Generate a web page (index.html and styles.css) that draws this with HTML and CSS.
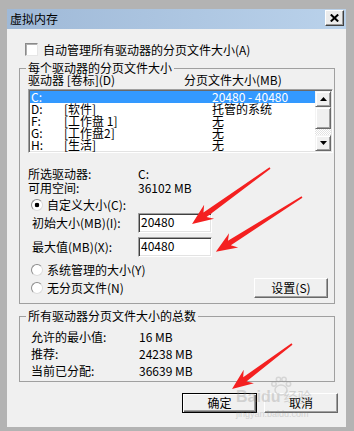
FILE: index.html
```html
<!DOCTYPE html>
<html>
<head>
<meta charset="utf-8">
<link rel="stylesheet" href="styles.css">
</head>
<body>
<div class="window">
  <div class="titlebar">
    <span class="title">虚拟内存</span>
    <span class="close"><svg width="9" height="8" viewBox="0 0 9 8"><path d="M0.8 0.5 L8.2 7.5 M8.2 0.5 L0.8 7.5" stroke="#000" stroke-width="2"/></svg></span>
  </div>
  <div class="dialog">
    <div class="check-row"><span class="checkbox"></span><span>自动管理所有驱动器的分页文件大小(A)</span></div>

    <fieldset class="group group1">
      <legend>每个驱动器的分页文件大小</legend>
      <div class="list-head"><span>驱动器 [卷标](D)</span><span>分页文件大小(MB)</span></div>
      <div class="listbox">
        <div class="rows">
          <div class="row sel"><span>C:</span><span></span><span>20480 - 40480</span></div>
          <div class="row"><span>D:</span><span>[软件]</span><span>托管的系统</span></div>
          <div class="row"><span>F:</span><span>[工作盘 1]</span><span>无</span></div>
          <div class="row"><span>G:</span><span>[工作盘2]</span><span>无</span></div>
          <div class="row"><span>H:</span><span>[生活]</span><span>无</span></div>
        </div>
        <div class="vscroll">
          <div class="sbtn"><svg width="7" height="4" viewBox="0 0 7 4"><polygon points="0,4 7,4 3.5,0" fill="#000"/></svg></div>
          <div class="thumb"></div>
          <div class="track"></div>
          <div class="sbtn"><svg width="7" height="4" viewBox="0 0 7 4"><polygon points="0,0 7,0 3.5,4" fill="#000"/></svg></div>
        </div>
      </div>
      <div class="info">
        <div class="kv"><span class="k">所选驱动器:</span><span>C:</span></div>
        <div class="kv"><span class="k">可用空间:</span><span>36102 MB</span></div>
      </div>
      <div class="radio-row r1"><span class="radio on"></span><span>自定义大小(C):</span></div>
      <div class="field-row f1"><span class="flabel">初始大小(MB)(I):</span><span class="edit">20480</span></div>
      <div class="field-row f2"><span class="flabel">最大值(MB)(X):</span><span class="edit">40480</span></div>
      <div class="radio-row r2"><span class="radio"></span><span>系统管理的大小(Y)</span></div>
      <div class="last-row">
        <div class="radio-row"><span class="radio"></span><span>无分页文件(N)</span></div>
        <button class="btn set">设置(S)</button>
      </div>
    </fieldset>

    <fieldset class="group group2">
      <legend>所有驱动器分页文件大小的总数</legend>
      <div class="kv2"><span class="k2">允许的最小值:</span><span>16 MB</span></div>
      <div class="kv2"><span class="k2">推荐:</span><span>24238 MB</span></div>
      <div class="kv2"><span class="k2">当前已分配:</span><span>36639 MB</span></div>
    </fieldset>

    <div class="buttons">
      <button class="btn default">确定</button>
      <button class="btn">取消</button>
    </div>
  </div>

  <div class="watermark">
    <svg class="paw" width="22" height="20" viewBox="0 0 22 20">
      <ellipse cx="11" cy="14" rx="6" ry="5" fill="none" stroke="#9a9a9a" stroke-width="1.5"/>
      <circle cx="4" cy="8" r="2.2" fill="none" stroke="#9a9a9a" stroke-width="1.5"/>
      <circle cx="8.5" cy="3.5" r="2.2" fill="none" stroke="#9a9a9a" stroke-width="1.5"/>
      <circle cx="14" cy="3.5" r="2.2" fill="none" stroke="#9a9a9a" stroke-width="1.5"/>
      <circle cx="18.5" cy="8" r="2.2" fill="none" stroke="#9a9a9a" stroke-width="1.5"/>
    </svg>
    <div class="wm-line"><span class="wm-bai">Baidu</span><span class="wm-jy">经验</span></div>
    <div class="wm-url">jingyan.baidu.com</div>
  </div>

  <svg class="arrows" width="354" height="431" viewBox="0 0 354 431">
    <polygon transform="translate(270,168) rotate(144.3)" points="0,-0.8 80,-2.7 75,-8.5 96,0 75,8.5 80,2.7 0,0.8" fill="#f42020"/>
    <polygon transform="translate(302,197) rotate(147.6)" points="0,-0.8 86,-2.7 81,-8.5 102,0 81,8.5 86,2.7 0,0.8" fill="#f42020"/>
    <polygon transform="translate(292,344) rotate(143.1)" points="0,-0.8 59,-2.7 54,-8.5 75,0 54,8.5 59,2.7 0,0.8" fill="#f42020"/>
  </svg>
</div>
</body>
</html>
```

FILE: styles.css
```css
html, body {
  margin: 0;
  padding: 0;
  background: #ffffff;
}

body {
  font-family: "Noto Sans CJK SC", "Noto Sans", sans-serif;
  font-size: 12px;
  color: #000;
}

.window {
  position: relative;
  width: 354px;
  height: 431px;
  box-sizing: border-box;
  padding: 9px 8px 4px 7px;
  background: #b3b3b3;
  overflow: hidden;
}

.titlebar {
  height: 20px;
  display: flex;
  align-items: flex-start;
  justify-content: space-between;
  background: linear-gradient(to right, #9fb9d7, #bad2eb);
}

.title {
  margin-left: 3px;
  line-height: 20px;
  font-size: 12px;
}

.close {
  margin-top: 1px;
  margin-right: 2px;
  width: 19px;
  height: 16px;
  box-sizing: border-box;
  display: flex;
  align-items: center;
  justify-content: center;
  background: #ececec;
  border: 1px solid;
  border-color: #ffffff #404040 #404040 #ffffff;
  box-shadow: inset -1px -1px 0 #9a9a9a;
}

.dialog {
  height: 398px;
  background: #f0f0f0;
  overflow: hidden;
}

.check-row {
  margin-top: 14px;
  padding-left: 18px;
  height: 13px;
  display: flex;
  align-items: center;
  gap: 5px;
  line-height: 13px;
}

.checkbox {
  width: 13px;
  height: 13px;
  box-sizing: border-box;
  background: #fff;
  border: 1px solid;
  border-color: #8a8a8a #e6e6e6 #e6e6e6 #8a8a8a;
  box-shadow: inset 1px 1px 0 #b0b0b0;
}

.group {
  margin: 0 11px 0 12px;
  border: 1px solid #a0a0a0;
  min-width: 0;
}

.group legend {
  padding: 0 2px;
  line-height: 12px;
  height: 12px;
}

.group1 {
  margin-top: 6px;
  padding: 0 1px 5px 8px;
}

.group1 legend {
  margin-left: -2px;
}

.group2 {
  margin-top: 6px;
  padding: 6px 1px 2px 11px;
}

.group2 legend {
  margin-left: -5px;
}

.list-head {
  display: grid;
  grid-template-columns: 156px 1fr;
  height: 12px;
  line-height: 12px;
}

.listbox {
  margin-top: 3px;
  height: 64px;
  box-sizing: border-box;
  display: flex;
  background: #fff;
  border: 1px solid;
  border-color: #a0a0a0 #ffffff #ffffff #a0a0a0;
  box-shadow: inset 1px 1px 0 #696969, inset -1px -1px 0 #e3e3e3;
  padding: 1px;
}

.rows {
  flex: 1;
}

.row {
  display: grid;
  grid-template-columns: 33px 148px 1fr;
  height: 12px;
  line-height: 12px;
  padding-left: 1px;
  white-space: nowrap;
}

.row.sel {
  background: #3399ff;
  color: #fff;
}

.vscroll {
  width: 16px;
  display: flex;
  flex-direction: column;
}

.sbtn,
.thumb {
  box-sizing: border-box;
  background: #f0f0f0;
  border: 1px solid;
  border-color: #f4f4f4 #696969 #696969 #f4f4f4;
  box-shadow: inset 1px 1px 0 #ffffff, inset -1px -1px 0 #a0a0a0;
}

.sbtn {
  height: 16px;
  display: flex;
  align-items: center;
  justify-content: center;
}

.sbtn svg {
  display: block;
}

.thumb {
  height: 22px;
}

.track {
  flex: 1;
  background: repeating-conic-gradient(#ffffff 0 25%, #e2e2e2 0 50%) 0 0 / 2px 2px;
}

.info {
  margin-top: 14px;
}

.kv {
  display: flex;
  height: 14px;
  line-height: 14px;
}

.k {
  width: 110px;
}

.radio-row {
  display: flex;
  align-items: center;
  gap: 4px;
  height: 12px;
  line-height: 12px;
  padding-left: 3px;
}

.radio {
  width: 12px;
  height: 12px;
  box-sizing: border-box;
  border-radius: 50%;
  background: #fff;
  border: 1px solid;
  border-color: #8c8c8c #dcdcdc #dcdcdc #8c8c8c;
}

.radio.on {
  background: radial-gradient(circle, #000 0 2px, #fff 2.6px);
}

.r1 {
  margin-top: 4px;
}

.field-row {
  display: flex;
  align-items: center;
  height: 20px;
  padding-left: 4px;
}

.f1 {
  margin-top: 2px;
}

.f2 {
  margin-top: 4px;
}

.flabel {
  width: 106px;
  line-height: 12px;
}

.edit {
  width: 74px;
  height: 20px;
  box-sizing: border-box;
  padding-left: 2px;
  line-height: 16px;
  background: #fff;
  border: 1px solid;
  border-color: #a0a0a0 #ffffff #ffffff #a0a0a0;
  box-shadow: inset 1px 1px 0 #404040, inset -1px -1px 0 #e3e3e3;
}

.r2 {
  margin-top: 7px;
}

.last-row {
  margin-top: 2px;
  height: 20px;
  display: flex;
  align-items: center;
  justify-content: space-between;
  padding-right: 5px;
}

.btn {
  font-family: "Noto Sans CJK SC", "Noto Sans", sans-serif;
  font-size: 12px;
  color: #000;
  height: 20px;
  width: 74px;
  padding: 0;
  margin: 0;
  line-height: 16px;
  box-sizing: border-box;
  background: #f0f0f0;
  border: 1px solid;
  border-color: #ffffff #696969 #696969 #ffffff;
  box-shadow: inset -1px -1px 0 #a0a0a0;
}

.btn.default {
  width: 75px;
  border-color: #000;
  box-shadow: inset 1px 1px 0 #ffffff, inset -1px -1px 0 #696969, inset -2px -2px 0 #a0a0a0;
}

.kv2 {
  display: flex;
  height: 17px;
  line-height: 17px;
}

.k2 {
  width: 108px;
}

.buttons {
  margin-top: 11px;
  display: flex;
  justify-content: flex-end;
  gap: 7px;
  padding-right: 8px;
}

.arrows {
  position: absolute;
  left: 0;
  top: 0;
  pointer-events: none;
}

.watermark {
  position: absolute;
  left: 236px;
  top: 376px;
  width: 100px;
  opacity: 0.3;
  pointer-events: none;
  color: #8c8c8c;
}

.paw {
  display: block;
  margin-left: 34px;
}

.wm-line {
  margin-top: -8px;
  display: flex;
  align-items: baseline;
  gap: 3px;
  line-height: 16px;
}

.wm-bai {
  font-family: "Liberation Sans", sans-serif;
  font-weight: bold;
  font-size: 16px;
}

.wm-jy {
  font-size: 14px;
}

.wm-url {
  font-family: "Liberation Sans", sans-serif;
  font-size: 9px;
  line-height: 10px;
  margin-top: 4px;
}
```
